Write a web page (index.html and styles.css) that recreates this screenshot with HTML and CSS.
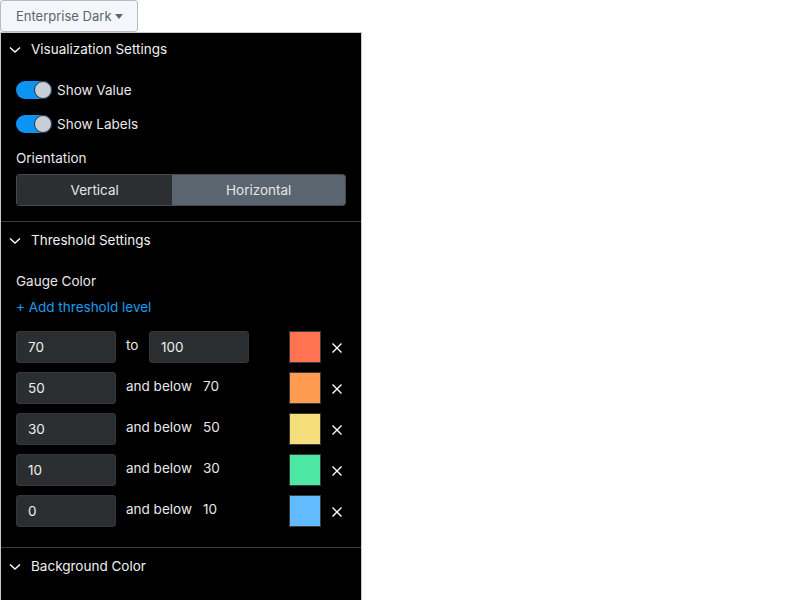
FILE: index.html
```html
<!DOCTYPE html>
<html>
<head>
<meta charset="utf-8">
<link rel="stylesheet" href="styles.css">
</head>
<body>
<div class="theme-btn">Enterprise Dark<span class="caret"></span></div>
<div class="panel">
  <div class="section">
    <div class="sec-head"><svg class="chev" viewBox="0 0 12 8" width="12" height="8"><path d="M1 1.5 L6 6 L11 1.5" fill="none" stroke="#fff" stroke-width="1.4"/></svg>Visualization Settings</div>
    <div class="sec-body">
      <div class="toggle-row"><span class="toggle"><span class="knob"></span></span>Show Value</div>
      <div class="toggle-row"><span class="toggle"><span class="knob"></span></span>Show Labels</div>
      <div class="label">Orientation</div>
      <div class="segmented"><div class="seg">Vertical</div><div class="seg active">Horizontal</div></div>
    </div>
  </div>
  <div class="section">
    <div class="sec-head"><svg class="chev" viewBox="0 0 12 8" width="12" height="8"><path d="M1 1.5 L6 6 L11 1.5" fill="none" stroke="#fff" stroke-width="1.4"/></svg>Threshold Settings</div>
    <div class="sec-body">
      <div class="label">Gauge Color</div>
      <div class="add-link">+ Add threshold level</div>
      <div class="rows">
        <div class="row"><div class="inp">70</div><span class="mid">to</span><div class="inp">100</div><span class="sw" style="background:#ff7352"></span><svg class="x" viewBox="0 0 10 10" width="10" height="10"><path d="M0.5 0.5 L9.5 9.5 M9.5 0.5 L0.5 9.5" stroke="#fff" stroke-width="1.4"/></svg></div>
        <div class="row"><div class="inp">50</div><span class="mid">and below</span><span class="val">70</span><span class="sw" style="background:#ff9a51"></span><svg class="x" viewBox="0 0 10 10" width="10" height="10"><path d="M0.5 0.5 L9.5 9.5 M9.5 0.5 L0.5 9.5" stroke="#fff" stroke-width="1.4"/></svg></div>
        <div class="row"><div class="inp">30</div><span class="mid">and below</span><span class="val">50</span><span class="sw" style="background:#f5df7c"></span><svg class="x" viewBox="0 0 10 10" width="10" height="10"><path d="M0.5 0.5 L9.5 9.5 M9.5 0.5 L0.5 9.5" stroke="#fff" stroke-width="1.4"/></svg></div>
        <div class="row"><div class="inp">10</div><span class="mid">and below</span><span class="val">30</span><span class="sw" style="background:#4de8a4"></span><svg class="x" viewBox="0 0 10 10" width="10" height="10"><path d="M0.5 0.5 L9.5 9.5 M9.5 0.5 L0.5 9.5" stroke="#fff" stroke-width="1.4"/></svg></div>
        <div class="row"><div class="inp">0</div><span class="mid">and below</span><span class="val">10</span><span class="sw" style="background:#62baff"></span><svg class="x" viewBox="0 0 10 10" width="10" height="10"><path d="M0.5 0.5 L9.5 9.5 M9.5 0.5 L0.5 9.5" stroke="#fff" stroke-width="1.4"/></svg></div>
      </div>
    </div>
  </div>
  <div class="section last">
    <div class="sec-head"><svg class="chev" viewBox="0 0 12 8" width="12" height="8"><path d="M1 1.5 L6 6 L11 1.5" fill="none" stroke="#fff" stroke-width="1.4"/></svg>Background Color</div>
  </div>
</div>
</body>
</html>
```
FILE: styles.css
```css
html, body { margin: 0; padding: 0; background: #fff; }
body { font-family: Inter, "Noto Sans", sans-serif; font-size: 13.5px; color: #e8e8e8; }
.theme-btn {
  display: inline-flex; align-items: center; box-sizing: border-box;
  height: 32px; width: 138px; padding: 0 0 0 15px;
  background: #f4f6f9; border: 1px solid #b5bcc4; border-radius: 3px;
  color: #5b6570; font-size: 13px;
}
.caret { display: inline-block; width: 0; height: 0; margin-left: 3px; border-left: 4px solid transparent; border-right: 4px solid transparent; border-top: 5px solid #5b6570; }
.panel {
  width: 362px; box-sizing: border-box; background: #000;
  border: 1px solid #c8c8c8; border-bottom: none; height: 568px;
}
.section { border-bottom: 1px solid #3a3a3a; }
.section + .section { padding-top: 2px; }
.section.last { border-bottom: none; }
.sec-head { display: flex; align-items: center; height: 32px; padding-left: 8px; color: #f0f0f0; font-size: 13.5px; }
.chev { margin-right: 10px; margin-top: 1px; }
.sec-body { padding: 16px 15px 15px 15px; }
.section + .section .sec-body { padding-top: 16px; padding-bottom: 20px; }
.toggle-row { display: flex; align-items: center; height: 18px; margin-bottom: 16px; }
.toggle { position: relative; width: 36px; height: 18px; border-radius: 9px; background: #0b94f2; margin-right: 5px; box-sizing: border-box; }
.knob { position: absolute; right: 0; top: 0; width: 18px; height: 18px; border-radius: 50%; background: #c9ced6; border: 1.5px solid #26313c; box-sizing: border-box; }
.label { height: 18px; line-height: 18px; }
.segmented { display: flex; margin-top: 7px; height: 32px; border: 1px solid #464a4e; border-radius: 3px; overflow: hidden; box-sizing: border-box; }
.seg { flex: 1 1 auto; display: flex; align-items: center; justify-content: center; background: #2b2f32; color: #e6e6e6; }
.seg.active { background: #5b6570; }
.add-link { color: #1a9cf0; height: 18px; line-height: 18px; margin-top: 8px; }
.rows { margin-top: 15px; display: flex; flex-direction: column; gap: 9px; }
.row { display: flex; align-items: center; height: 32px; }
.inp { box-sizing: border-box; width: 100px; height: 32px; background: #2a2e31; border: 1px solid #34383b; border-radius: 3px; padding-left: 11px; display: flex; align-items: center; color: #eee; }
.mid { margin-left: 10px; width: 77px; margin-top: -4px; }
.row .mid + .inp { margin-left: -54px; }
.val { width: 86px; margin-top: -4px; }
.sw { box-sizing: border-box; width: 32px; height: 32px; border: 1px solid #3a3a3a; }
.row .inp + .mid + .inp + .sw { margin-left: 40px; }
.x { margin-left: 11px; margin-top: 2px; }
```
